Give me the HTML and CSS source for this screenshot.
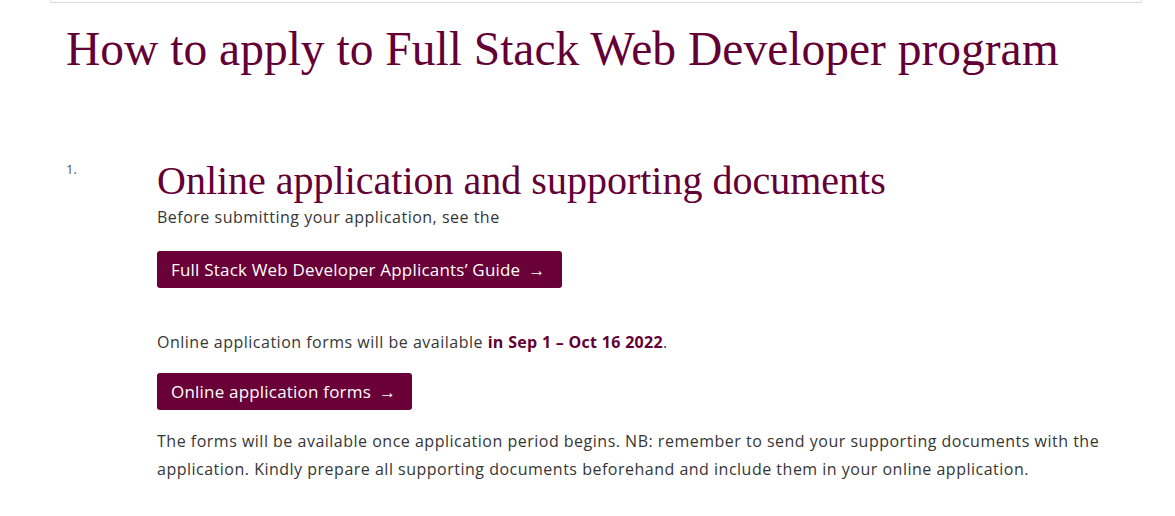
FILE: index.html
```html
<!DOCTYPE html>
<html lang="en">
<head>
<meta charset="UTF-8">
<title>How to apply</title>
<link rel="stylesheet" href="styles.css">
</head>
<body>
  <div class="topbar"></div>
  <div class="page">
    <h1 class="title">How to apply to Full Stack Web Developer program</h1>
    <ol class="steps">
      <li class="step">
        <div class="step-num">1.</div>
        <div class="step-body">
          <h2 class="step-title">Online application and supporting documents</h2>
          <p class="text">Before submitting your application, see the</p>
          <a class="button first" href="#">Full Stack Web Developer Applicants’ Guide <span class="arrow">→</span></a>
          <p class="text spaced">Online application forms will be available <strong>in Sep 1 – Oct 16 2022</strong>.</p>
          <a class="button" href="#">Online application forms <span class="arrow">→</span></a>
          <p class="text note">The forms will be available once application period begins. NB: remember to send your supporting documents with the application. Kindly prepare all supporting documents beforehand and include them in your online application.</p>
        </div>
      </li>
    </ol>
  </div>
</body>
</html>
```

FILE: styles.css
```css
body {
  margin: 0;
  background: #fff;
  font-family: "Open Sans", sans-serif;
  color: #363636;
}

.topbar {
  margin: 0 33px 0 50px;
  height: 2px;
  border: 1px solid #ddd;
  border-top: none;
}

.page {
  padding: 0 0 0 66px;
}

.title {
  margin: 18px 0 0;
  font-family: "Liberation Serif", serif;
  font-weight: normal;
  font-size: 47.5px;
  line-height: 56px;
  color: #630035;
  white-space: nowrap;
}

.steps {
  list-style: none;
  margin: 82px 0 0;
  padding: 0;
}

.step {
  display: flex;
}

.step-num {
  width: 91px;
  flex-shrink: 0;
  font-size: 13px;
  line-height: 16px;
  color: #555;
  padding-top: 2px;
}

.step-body {
  flex: 1;
  padding-right: 40px;
}

.step-title {
  margin: 0;
  font-family: "Liberation Serif", serif;
  font-weight: normal;
  font-size: 40px;
  line-height: 44px;
  color: #630035;
}

.text {
  margin: 0;
  font-size: 16px;
  line-height: 28px;
  letter-spacing: 0.5px;
}

.text strong {
  color: #630035;
  letter-spacing: 0.3px;
}

.spaced {
  margin-top: 40px;
}

.note {
  margin-top: 17px;
}

.button {
  display: flex;
  align-items: center;
  width: fit-content;
  margin-top: 17px;
  padding: 0 16px 0 14px;
  height: 37px;
  background: #690038;
  color: #fff;
  font-size: 17px;
  letter-spacing: 0.2px;
  text-decoration: none;
  border-radius: 3px;
}

.button.first {
  margin-top: 20px;
}

.arrow {
  margin-left: 8px;
}
```
